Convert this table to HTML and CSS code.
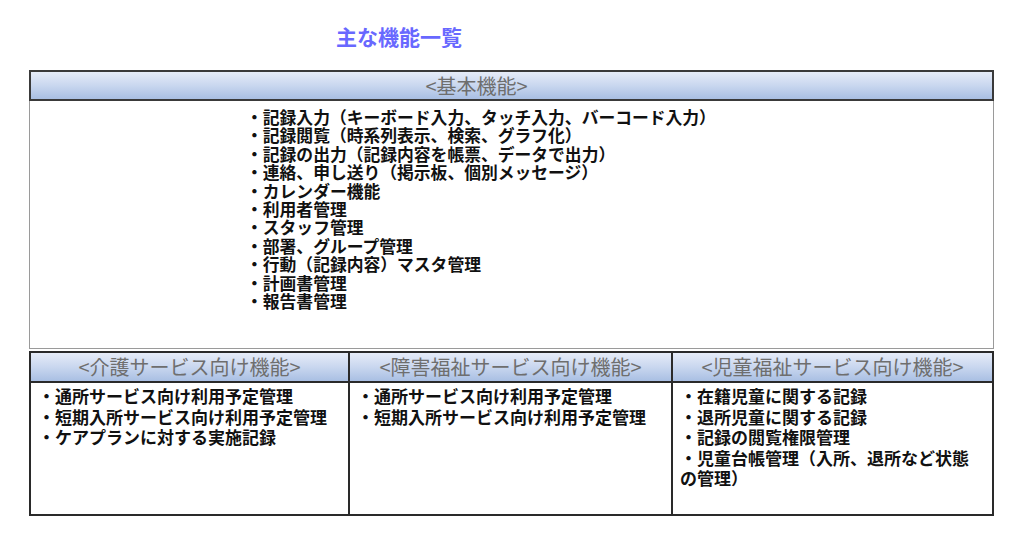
FILE: index.html
```html
<!DOCTYPE html>
<html lang="ja">
<head>
<meta charset="utf-8">
<title>主な機能一覧</title>
<link rel="stylesheet" href="styles.css">
</head>
<body>
<h1 class="title">主な機能一覧</h1>
<div class="frame">
  <section class="basic">
    <div class="head head-main">&lt;基本機能&gt;</div>
    <div class="basic-body">
      <ul class="list">
        <li>・記録入力（キーボード入力、タッチ入力、バーコード入力）</li>
        <li>・記録閲覧（時系列表示、検索、グラフ化）</li>
        <li>・記録の出力（記録内容を帳票、データで出力）</li>
        <li>・連絡、申し送り（掲示板、個別メッセージ）</li>
        <li>・カレンダー機能</li>
        <li>・利用者管理</li>
        <li>・スタッフ管理</li>
        <li>・部署、グループ管理</li>
        <li>・行動（記録内容）マスタ管理</li>
        <li>・計画書管理</li>
        <li>・報告書管理</li>
      </ul>
    </div>
  </section>
  <section class="services">
    <div class="col">
      <div class="head head-sub">&lt;介護サービス向け機能&gt;</div>
      <ul class="list list-sub">
        <li>・通所サービス向け利用予定管理</li>
        <li>・短期入所サービス向け利用予定管理</li>
        <li>・ケアプランに対する実施記録</li>
      </ul>
    </div>
    <div class="col">
      <div class="head head-sub">&lt;障害福祉サービス向け機能&gt;</div>
      <ul class="list list-sub">
        <li>・通所サービス向け利用予定管理</li>
        <li>・短期入所サービス向け利用予定管理</li>
      </ul>
    </div>
    <div class="col">
      <div class="head head-sub">&lt;児童福祉サービス向け機能&gt;</div>
      <ul class="list list-sub">
        <li>・在籍児童に関する記録</li>
        <li>・退所児童に関する記録</li>
        <li>・記録の閲覧権限管理</li>
        <li>・児童台帳管理（入所、退所など状態の管理）</li>
      </ul>
    </div>
  </section>
</div>
</body>
</html>
```
FILE: styles.css
```css
html, body {
  margin: 0;
  padding: 0;
  background: #ffffff;
}
body {
  font-family: "Noto Sans CJK JP", "Noto Sans", sans-serif;
  color: #111;
}
.title {
  margin: 0;
  padding: 23px 0 0 336px;
  height: 70px;
  box-sizing: border-box;
  font-size: 21px;
  line-height: 26px;
  font-weight: 700;
  color: #6868ff;
}
.frame {
  margin-left: 29px;
  width: 965px;
}
.head {
  box-sizing: border-box;
  height: 31px;
  border: 2px solid #3a3a3a;
  background: linear-gradient(#e6ecf8 0%, #c9d7ef 50%, #a9bfe3 100%);
  color: #6e6e6e;
  font-size: 20px;
  line-height: 27px;
  text-align: center;
}
.head-main {
  padding-right: 70px;
}
.basic-body {
  box-sizing: border-box;
  height: 248px;
  border: 1px solid #9a9a9a;
  border-top: none;
  padding: 7px 0 0 216px;
}
.list {
  list-style: none;
  margin: 0;
  padding: 0;
  font-size: 16.8px;
  line-height: 18.4px;
  font-weight: 700;
  color: #111;
}
.services {
  margin-top: 2px;
  display: grid;
  grid-template-columns: 317px 323px 321px;
  height: 165px;
  box-sizing: border-box;
  border: 2px solid #2a2a2a;
  border-top: none;
}
.col {
  border-left: 2px solid #2a2a2a;
}
.col:first-child {
  border-left: none;
}
.head-sub {
  height: 32px;
  border: none;
  border-top: 2px solid #2a2a2a;
  border-bottom: 2px solid #2a2a2a;
  line-height: 28px;
}
.list-sub {
  font-size: 17px;
  line-height: 20.6px;
  padding: 3px 8px 0 7px;
}
```
